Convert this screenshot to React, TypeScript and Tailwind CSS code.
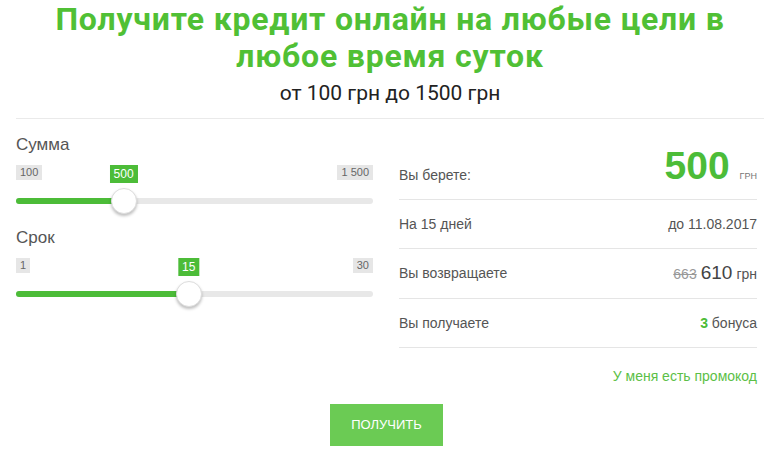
import React from 'react';

type SliderProps = { label: string; min: number; max: number; value: number; minText: string; maxText: string };

function Slider({ label, min, max, value, minText, maxText }: SliderProps) {
  const pct = (value - min) / (max - min);
  // thumb is 26px wide, its centre travels 13px..(width-13px)
  const pos = `calc(13px + (100% - 26px) * ${pct})`;
  return (
    <div>
      <div className="text-[17px] leading-[20px] text-[#555]">{label}</div>
      <div className="relative mt-[10px] flex h-[18px] items-start justify-between">
        <span className="bg-[#e6e6e6] px-[4px] text-[11px] leading-[15px] text-[#666]">{minText}</span>
        <span
          className="absolute top-0 -translate-x-1/2 bg-[#4cbc38] px-[4px] text-[12px] leading-[18px] text-white"
          style={{ left: pos }}
        >
          {value}
        </span>
        <span className="bg-[#e6e6e6] px-[4px] text-[11px] leading-[15px] text-[#666]">{maxText}</span>
      </div>
      <div className="relative mt-[15px] h-[6px] rounded-full bg-[#e8e8e8]">
        <div className="h-full rounded-full bg-[#4cbc38]" style={{ width: pos }} />
        <div
          className="absolute top-1/2 h-[26px] w-[26px] -translate-x-1/2 -translate-y-1/2 rounded-full border border-[#ddd] bg-white shadow-[0_2px_3px_rgba(0,0,0,0.25)]"
          style={{ left: pos }}
        />
      </div>
    </div>
  );
}

export default function App() {
  return (
    <div className="h-[463px] w-[780px] bg-white font-['Liberation_Sans',Arial,sans-serif] text-[#555]">
      <div className="px-4 text-center">
        <h1 className="pt-[1px] font-['Roboto',sans-serif] text-[32px] font-bold leading-[37px] tracking-[0.8px] text-[#50c035]">
          Получите кредит онлайн на любые цели в<br />любое время суток
        </h1>
        <p className="mt-[6px] font-['Roboto',sans-serif] text-[21px] leading-[25px] text-[#222]">
          от 100 грн до 1500 грн
        </p>
      </div>

      <div className="mx-4 mt-[12px] border-t border-[#eaeaea]" />

      <div className="flex justify-between pl-4 pr-[23px] pt-[16px]">
        <div className="w-[357px]">
          <Slider label="Сумма" min={100} max={1500} value={500} minText="100" maxText="1 500" />
          <div className="mt-[24px]">
            <Slider label="Срок" min={1} max={30} value={15} minText="1" maxText="30" />
          </div>
        </div>

        <div className="w-[358px] text-[14px]">
          <div className="flex h-[65px] items-end justify-between border-b border-[#e5e5e5] pb-[16px]">
            <span className="leading-[16px]">Вы берете:</span>
            <span className="flex items-baseline">
              <span className="text-[39px] font-bold leading-[34px] text-[#4cbc38]">500</span>
              <span className="ml-[10px] text-[9px] leading-none text-[#777]">ГРН</span>
            </span>
          </div>
          <div className="flex h-[49px] items-center justify-between border-b border-[#e5e5e5]">
            <span>На 15 дней</span>
            <span>до 11.08.2017</span>
          </div>
          <div className="flex h-[50px] items-center justify-between border-b border-[#e5e5e5]">
            <span>Вы возвращаете</span>
            <span className="flex items-baseline">
              <span className="text-[#999] line-through">663</span>
              <span className="ml-[4px] text-[19px] text-[#444]">610</span>
              <span className="ml-[4px]">грн</span>
            </span>
          </div>
          <div className="flex h-[49px] items-center justify-between border-b border-[#e5e5e5]">
            <span>Вы получаете</span>
            <span>
              <span className="font-bold text-[#4cbc38]">3</span> бонуса
            </span>
          </div>
          <div className="pt-[20px] text-right text-[14px] leading-[16px] text-[#5cbf47]">У меня есть промокод</div>
        </div>
      </div>

      <div className="mt-[20px] flex justify-center">
        <button className="ml-[-7px] h-[42px] w-[113px] bg-[#6bcb54] text-[13px] uppercase text-white">Получить</button>
      </div>
    </div>
  );
}
